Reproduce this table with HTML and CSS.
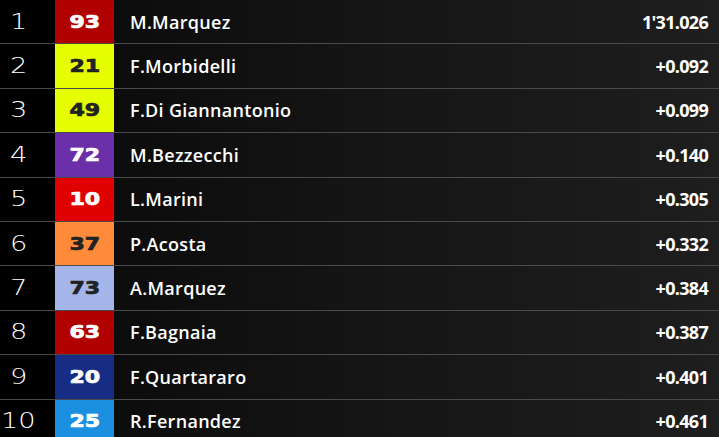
FILE: index.html
```html
<!DOCTYPE html>
<html>
<head>
<meta charset="utf-8">
<link rel="stylesheet" href="styles.css">
</head>
<body>
<div class="table">
  <div class="row"><div class="pos"><span class="glyph">1</span></div><div class="num red-dark light"><span class="glyph">93</span></div><div class="name">M.Marquez</div><div class="time">1'31.026</div></div>
  <div class="row"><div class="pos"><span class="glyph">2</span></div><div class="num yellow"><span class="glyph">21</span></div><div class="name">F.Morbidelli</div><div class="time">+0.092</div></div>
  <div class="row"><div class="pos"><span class="glyph">3</span></div><div class="num yellow"><span class="glyph">49</span></div><div class="name">F.Di Giannantonio</div><div class="time">+0.099</div></div>
  <div class="row"><div class="pos"><span class="glyph">4</span></div><div class="num purple light"><span class="glyph">72</span></div><div class="name">M.Bezzecchi</div><div class="time">+0.140</div></div>
  <div class="row"><div class="pos"><span class="glyph">5</span></div><div class="num red light"><span class="glyph">10</span></div><div class="name">L.Marini</div><div class="time">+0.305</div></div>
  <div class="row"><div class="pos"><span class="glyph">6</span></div><div class="num orange"><span class="glyph">37</span></div><div class="name">P.Acosta</div><div class="time">+0.332</div></div>
  <div class="row"><div class="pos"><span class="glyph">7</span></div><div class="num lavender"><span class="glyph">73</span></div><div class="name">A.Marquez</div><div class="time">+0.384</div></div>
  <div class="row"><div class="pos"><span class="glyph">8</span></div><div class="num red-dark light"><span class="glyph">63</span></div><div class="name">F.Bagnaia</div><div class="time">+0.387</div></div>
  <div class="row"><div class="pos"><span class="glyph">9</span></div><div class="num navy light"><span class="glyph">20</span></div><div class="name">F.Quartararo</div><div class="time">+0.401</div></div>
  <div class="row"><div class="pos"><span class="glyph">10</span></div><div class="num blue light"><span class="glyph">25</span></div><div class="name">R.Fernandez</div><div class="time">+0.461</div></div>
</div>
</body>
</html>
```
FILE: styles.css
```css
html, body {
  margin: 0;
  padding: 0;
  background: #000;
  overflow: hidden;
}
.table {
  width: 719px;
  display: flex;
  flex-direction: column;
}
.row {
  display: flex;
  align-items: stretch;
  height: 43.4px;
  border-bottom: 1px solid #4a4a4a;
  background: linear-gradient(to right, #000 0px, #000 55px, #0c0c0c 114px, #161616 400px, #1e1e1e 719px);
}
.glyph {
  display: inline-block;
}
.pos {
  width: 55px;
  flex: none;
  display: flex;
  align-items: center;
  justify-content: center;
  padding-right: 18px;
  box-sizing: border-box;
  color: #fff;
  font-family: "DejaVu Sans", sans-serif;
  font-weight: 200;
  font-size: 21px;
}
.pos .glyph {
  transform: scaleX(1.3);
}
.num {
  width: 59px;
  flex: none;
  display: flex;
  align-items: center;
  justify-content: center;
  font-family: "DejaVu Sans", sans-serif;
  font-weight: 700;
  font-size: 17px;
  color: #222;
  -webkit-text-stroke: 0.7px currentColor;
}
.num .glyph {
  transform: scaleX(1.3);
}
.num.light { color: #fff; }
.red-dark { background: #b10000; }
.yellow { background: #e5ff00; }
.purple { background: #6b2fa9; }
.red { background: #e00000; }
.orange { background: #ff8a3a; }
.lavender { background: #a3b5e9; }
.navy { background: #172d85; }
.blue { background: #1d8fe0; }
.name {
  flex: 1;
  display: flex;
  align-items: center;
  padding-left: 16px;
  color: #fff;
  font-family: "Open Sans", sans-serif;
  font-weight: 600;
  font-size: 18px;
  letter-spacing: 0.3px;
}
.time {
  display: flex;
  align-items: center;
  padding-right: 11px;
  color: #fff;
  font-family: "Open Sans", sans-serif;
  font-weight: 700;
  font-size: 18px;
  letter-spacing: -0.7px;
}
```
